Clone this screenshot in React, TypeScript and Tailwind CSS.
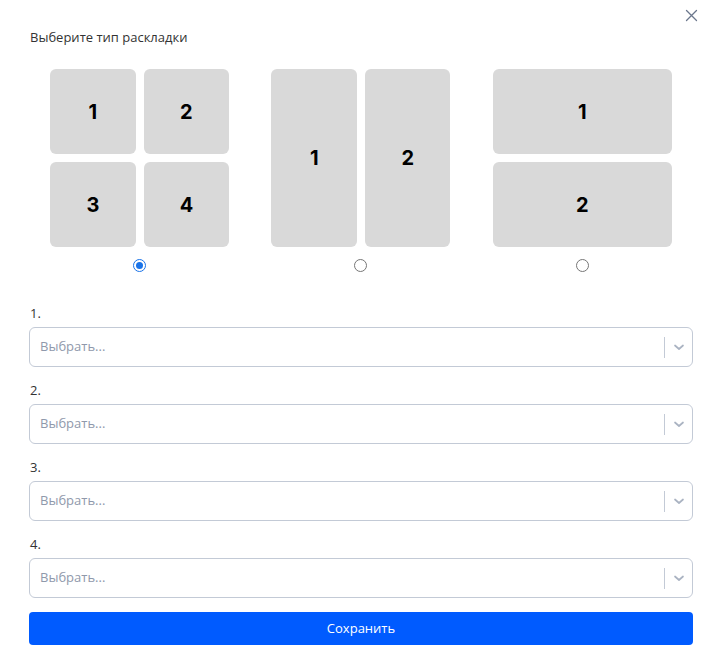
import React, { useState } from "react";

function Tile({ n, className }: { n: number; className: string }) {
  return (
    <div
      className={`bg-[#d9d9d9] rounded-[6px] flex items-center justify-center text-[20px] font-bold text-black ${className}`}
      style={{ fontFamily: "Inter, 'Liberation Sans', sans-serif" }}
    >
      {n}
    </div>
  );
}

function Radio({ checked, onClick }: { checked: boolean; onClick: () => void }) {
  return (
    <button onClick={onClick} className="mt-[12px] flex items-center justify-center">
      {checked ? (
        <span className="w-[13px] h-[13px] rounded-full border-[1.5px] border-[#1a73e8] flex items-center justify-center">
          <span className="w-[7px] h-[7px] rounded-full bg-[#1a73e8]" />
        </span>
      ) : (
        <span className="w-[13px] h-[13px] rounded-full border border-[#767676] bg-white" />
      )}
    </button>
  );
}

function Select({ label }: { label: string }) {
  return (
    <div className="flex flex-col">
      <div className="text-[13px] leading-[18px] text-[#333] mb-[5px] pl-px">{label}</div>
      <div className="h-[40px] border border-[#c3cad6] rounded-[6px] flex items-center bg-white">
        <div className="flex-1 pl-[10px] text-[13px] text-[#8f99ab]">Выбрать...</div>
        <div className="w-px h-[21px] bg-[#c3cad6]" />
        <div className="w-[27px] flex items-center justify-center">
          <svg width="12" height="12" viewBox="0 0 12 12" fill="none">
            <path d="M2 4.5 L6 8 L10 4.5" stroke="#aab3c2" strokeWidth="1.7" strokeLinecap="round" strokeLinejoin="round" />
          </svg>
        </div>
      </div>
    </div>
  );
}

export default function App() {
  const [sel, setSel] = useState(0);
  return (
    <div
      className="relative w-[720px] h-[667px] bg-white pl-[29px] pr-[27px] pt-[28px]"
      style={{ fontFamily: "'Open Sans', 'Noto Sans', sans-serif" }}
    >
      <button className="absolute top-[8px] right-[22px] w-[14px] h-[14px] flex items-center justify-center">
        <svg width="13" height="13" viewBox="0 0 13 13" fill="none">
          <path d="M1.5 1.5 L11.5 11.5 M11.5 1.5 L1.5 11.5" stroke="#6b778c" strokeWidth="1.3" strokeLinecap="round" />
        </svg>
      </button>
      <div className="text-[13px] leading-[18px] text-[#333] pl-px">Выберите тип раскладки</div>

      <div className="grid grid-cols-3 mt-[23px]">
        <div className="flex flex-col items-center">
          <div className="grid grid-cols-2 gap-[8px] w-[179px]">
            <Tile n={1} className="h-[85px]" />
            <Tile n={2} className="h-[85px]" />
            <Tile n={3} className="h-[85px]" />
            <Tile n={4} className="h-[85px]" />
          </div>
          <Radio checked={sel === 0} onClick={() => setSel(0)} />
        </div>
        <div className="flex flex-col items-center">
          <div className="grid grid-cols-2 gap-[8px] w-[179px]">
            <Tile n={1} className="h-[178px]" />
            <Tile n={2} className="h-[178px]" />
          </div>
          <Radio checked={sel === 1} onClick={() => setSel(1)} />
        </div>
        <div className="flex flex-col items-center">
          <div className="grid grid-cols-1 gap-[8px] w-[179px]">
            <Tile n={1} className="h-[85px]" />
            <Tile n={2} className="h-[85px]" />
          </div>
          <Radio checked={sel === 2} onClick={() => setSel(2)} />
        </div>
      </div>

      <div className="flex flex-col gap-[14px] mt-[32px]">
        <Select label="1." />
        <Select label="2." />
        <Select label="3." />
        <Select label="4." />
        <button className="h-[33px] rounded-[4px] bg-[#005bff] text-white text-[13px] font-medium">Сохранить</button>
      </div>
    </div>
  );
}
